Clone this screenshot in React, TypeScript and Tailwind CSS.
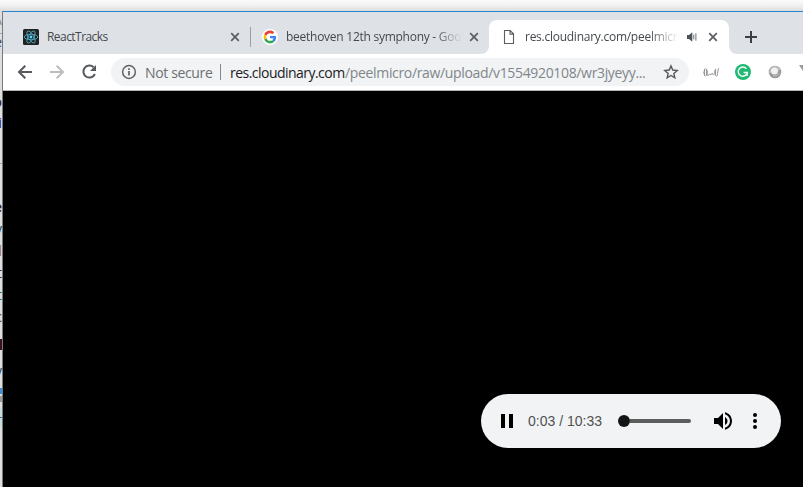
import type { ReactNode } from "react";

const ui = "font-['Open_Sans','Noto_Sans',sans-serif]";

function Close({ className = "" }: { className?: string }) {
  return (
    <svg className={`h-[10px] w-[10px] shrink-0 ${className}`} viewBox="0 0 10 10" fill="none" stroke="#5a5d61" strokeWidth="1.7">
      <path d="M1.2 1.2 8.8 8.8M8.8 1.2 1.2 8.8" />
    </svg>
  );
}

function ReactIcon() {
  return (
    <svg className="h-4 w-4 shrink-0" viewBox="0 0 16 16" fill="none" stroke="#53bcd8" strokeWidth="0.75">
      <rect width="16" height="16" rx="1.5" fill="#222" stroke="none" />
      <ellipse cx="8" cy="8" rx="6.8" ry="2.7" />
      <ellipse cx="8" cy="8" rx="6.8" ry="2.7" transform="rotate(60 8 8)" />
      <ellipse cx="8" cy="8" rx="6.8" ry="2.7" transform="rotate(120 8 8)" />
      <circle cx="8" cy="8" r="1.4" fill="#61dafb" stroke="none" />
    </svg>
  );
}

function GoogleIcon() {
  return (
    <svg className="h-4 w-4 shrink-0 rounded-full bg-white" viewBox="-6 -6 60 60">
      <path fill="#EA4335" d="M24 9.5c3.54 0 6.71 1.22 9.21 3.6l6.85-6.85C35.9 2.38 30.47 0 24 0 14.62 0 6.51 5.38 2.56 13.22l7.98 6.19C12.43 13.72 17.74 9.5 24 9.5z" />
      <path fill="#4285F4" d="M46.98 24.55c0-1.57-.15-3.09-.38-4.55H24v9.02h12.94c-.58 2.96-2.26 5.48-4.78 7.18l7.73 6c4.51-4.18 7.09-10.36 7.09-17.65z" />
      <path fill="#FBBC05" d="M10.53 28.59A14.5 14.5 0 0 1 9.77 24c0-1.6.27-3.14.76-4.59l-7.98-6.19A24 24 0 0 0 0 24c0 3.88.92 7.54 2.56 10.78l7.97-6.19z" />
      <path fill="#34A853" d="M24 48c6.48 0 11.93-2.13 15.89-5.81l-7.73-6c-2.15 1.45-4.92 2.3-8.16 2.3-6.26 0-11.57-4.22-13.47-9.91l-7.98 6.19C6.51 42.62 14.62 48 24 48z" />
    </svg>
  );
}

function TabStrip() {
  return (
    <div className={`flex h-[42px] shrink-0 items-end bg-[#dee1e6] text-[12px] text-[#45494d] ${ui}`}>
      <div className="flex h-[34px] w-[247px] shrink-0 items-center pl-5">
        <ReactIcon />
        <span className="ml-2 w-[183px] whitespace-nowrap tracking-[-0.55px]">ReactTracks</span>
        <Close />
      </div>
      <div className="mb-[7px] h-5 w-px shrink-0 bg-[#9a9da2]" />
      <div className="flex h-[34px] w-[230px] shrink-0 items-center pl-[11px]">
        <GoogleIcon />
        <span className="ml-2 w-[176px] overflow-hidden whitespace-nowrap tracking-[-0.26px] [mask-image:linear-gradient(to_right,black_148px,transparent)]">
          beethoven 12th symphony - Google Search
        </span>
        <Close className="ml-[7px]" />
      </div>
      <svg className="h-2 w-2 shrink-0" viewBox="0 0 8 8"><path d="M8 0v8H0a8 8 0 0 0 8-8Z" fill="#fff" /></svg>
      <div className="flex h-[34px] w-[240px] shrink-0 items-center rounded-t-lg bg-white pl-3">
        <svg className="h-4 w-4 shrink-0" viewBox="0 0 16 16" fill="none" stroke="#5a5d61" strokeWidth="1.1">
          <path d="M3.5 1.5h5.7l3.3 3.3v9.7h-9ZM9 1.8v3.3h3.4" />
        </svg>
        <span className="ml-2 w-[154px] overflow-hidden whitespace-nowrap tracking-[-0.26px] [mask-image:linear-gradient(to_right,black_124px,transparent)]">
          res.cloudinary.com/peelmicro/raw
        </span>
        <svg className="ml-2 h-[10px] w-[10px] shrink-0" viewBox="0 0 10 10">
          <path d="M0 3h2l3.3-2.8v9.6L2 7H0Z" fill="#4f5357" />
          <path d="M6.8 2.7v4.6M8.9 1.3v7.4" stroke="#5f6368" strokeWidth="0.9" />
        </svg>
        <Close className="ml-[11px]" />
      </div>
      <svg className="h-2 w-2 shrink-0" viewBox="0 0 8 8"><path d="M0 0v8h8a8 8 0 0 1-8-8Z" fill="#fff" /></svg>
      <svg className="mb-[11px] ml-2 h-3 w-3 shrink-0" viewBox="0 0 12 12" stroke="#3c4043" strokeWidth="2"><path d="M6 0v12M0 6h12" /></svg>
    </div>
  );
}

function Toolbar() {
  return (
    <div className={`flex h-[37px] shrink-0 items-center overflow-hidden border-b border-[#b5b6b7] bg-white pl-[14px] ${ui}`}>
      <svg className="h-4 w-4 shrink-0" viewBox="0 0 16 16" fill="none" stroke="#56595d" strokeWidth="2"><path d="M15 8H2.5M8.3 1.7 2 8l6.3 6.3" /></svg>
      <svg className="ml-4 h-4 w-4 shrink-0" viewBox="0 0 16 16" fill="none" stroke="#babcbe" strokeWidth="2"><path d="M1 8h12.5M7.7 1.7 14 8l-6.3 6.3" /></svg>
      <svg className="ml-4 h-4 w-4 shrink-0" viewBox="0 0 16 16"><path d="M12.6 3.3A6 6 0 1 0 13.9 10" fill="none" stroke="#56595d" strokeWidth="2" /><path d="M15 1v6H9Z" fill="#56595d" /></svg>
      <div className="ml-[14px] flex h-7 w-[578px] shrink-0 items-center rounded-full bg-[#f1f3f4] pl-[10px] text-[14px]">
        <svg className="h-4 w-4 shrink-0" viewBox="0 0 16 16" fill="none" stroke="#5f6368" strokeWidth="1.5"><circle cx="8" cy="8" r="6.4" /><path d="M8 7v4.6M8 4.2v1.7" strokeWidth="1.7" /></svg>
        <span className="ml-2 w-[75px] shrink-0 whitespace-nowrap tracking-[-0.36px] text-[#6b6f73]">Not secure</span>
        <span className="h-4 w-px shrink-0 bg-[#85888c]" />
        <span className="ml-[9px] w-[115px] shrink-0 whitespace-nowrap tracking-[-0.53px] text-[#202124]">res.cloudinary.com</span>
        <span className="w-[318px] shrink-0 whitespace-nowrap tracking-[-0.34px] text-[#80868b]">/peelmicro/raw/upload/v1554920108/wr3jyeyy...</span>
        <svg className="h-4 w-4 shrink-0" viewBox="0 0 16 16" fill="none" stroke="#56595d" strokeWidth="1.4"><path d="m8 1.9 1.75 4.15 4.5.4-3.4 2.95 1 4.4L8 11.5l-3.85 2.3 1-4.4-3.4-2.95 4.5-.4Z" /></svg>
      </div>
      <svg className="ml-[13px] h-4 w-[18px] shrink-0" viewBox="0 0 18 16" fill="none" stroke="#929292" strokeWidth="1">
        <path d="M3.6 4.6C1.9 4.6 2.8 7.4 1.5 8.4c1.3 1 .3 3.8 2.1 3.8M14.2 12.2c1.9 0 1-2.8 1.6-4.2.5-1.2-.2-3.8 1.4-3.8M5.2 6.2v4.5c0 1 1.7 1 2.2-.6M7.6 9.7c.6 1.6 2.2.9 2.6-.6 0 2 2.3 2 2.6.2V6.2M4.6 4.8v7M13.6 4.8v7M2.6 5.4v6" />
      </svg>
      <svg className="ml-[15px] h-4 w-4 shrink-0" viewBox="0 0 16 16"><circle cx="8" cy="8" r="8" fill="#20b973" /><path d="M11.4 4.7A4.6 4.6 0 1 0 12.4 8.5H8.6M12.2 8.5l-.1 3.2" fill="none" stroke="#fff" strokeWidth="1.4" /></svg>
      <svg className="ml-4 h-4 w-4 shrink-0" viewBox="0 0 16 16"><circle cx="8" cy="8" r="6.3" fill="#999" /><path d="M2.2 9.2A6 6 0 0 1 8 2c3 0 5 1.6 5.8 4Z" fill="#bbb" /><circle cx="7.5" cy="7" r="3.5" fill="#f1f1f1" /><path d="M6 12c3 .4 5-.9 6.5-3.2" fill="none" stroke="#c5c5c5" /></svg>
      <svg className="ml-4 h-4 w-4 shrink-0" viewBox="0 0 16 16"><path d="M0 1h16L8 13Z" fill="#999" /></svg>
    </div>
  );
}

function AudioPlayer() {
  return (
    <div className="flex h-[54px] w-[300px] shrink-0 items-center rounded-full bg-[#f1f3f4]">
      <svg className="ml-[20px] h-[14px] w-3 shrink-0" viewBox="0 0 12 14"><path d="M0 0h4v14H0ZM8 0h4v14H8Z" /></svg>
      <span className="ml-[15px] w-[75px] whitespace-nowrap font-['Liberation_Sans',sans-serif] text-[14px] text-[#505152]">0:03 / 10:33</span>
      <div className="ml-[15px] flex w-[73px] shrink-0 items-center">
        <span className="h-3 w-3 shrink-0 rounded-full bg-[#151515]" />
        <span className="h-1 flex-1 rounded-r-full bg-[#5b5c5c]" />
      </div>
      <svg className="ml-[20px] h-6 w-6 shrink-0" viewBox="0 0 24 24"><path d="M3 9v6h4l5 5V4L7 9H3zm13.5 3c0-1.77-1.02-3.29-2.5-4.03v8.05c1.48-.73 2.5-2.25 2.5-4.02zM14 3.23v2.06c2.89.86 5 3.54 5 6.71s-2.11 5.85-5 6.71v2.06c4.01-.91 7-4.49 7-8.77s-2.99-7.86-7-8.77z" /></svg>
      <svg className="ml-2 h-6 w-6 shrink-0" viewBox="0 0 24 24"><circle cx="12" cy="6" r="2" /><circle cx="12" cy="12" r="2" /><circle cx="12" cy="18" r="2" /></svg>
    </div>
  );
}

function Scrap({ className, children }: { className: string; children?: ReactNode }) {
  return <div className={`flex w-full shrink-0 items-center justify-end overflow-hidden text-[14px] leading-none ${className}`}>{children}</div>;
}

/* Visible edge of the document behind the browser window. */
function BackgroundPage() {
  return (
    <div className={`flex w-[3px] shrink-0 flex-col overflow-hidden border-r border-[#777a7d] bg-[#dedede] text-[#444] ${ui}`}>
      <Scrap className="h-[18px] text-[#888]">A</Scrap>
      <Scrap className="mt-[4px] h-4 border-t border-[#aaa]">e</Scrap>
      <Scrap className="mt-[45px] h-4 font-bold text-[#44260d]">o</Scrap>
      <Scrap className="mt-[5px] h-4 text-[#343080]">i</Scrap>
      <Scrap className="mt-[32px] h-px bg-[#aaa]" />
      <Scrap className="mt-[35px] h-4 font-bold text-[#44260d]">e</Scrap>
      <Scrap className="mt-[6px] h-4 text-[#245]">y</Scrap>
      <Scrap className="mt-[6px] h-4 text-[#a76d2c]">l</Scrap>
      <Scrap className="mt-[6px] h-4 text-[#624]">t</Scrap>
      <Scrap className="mt-[6px] h-4 text-[#276]">t</Scrap>
      <Scrap className="mt-[6px] h-4">c</Scrap>
      <Scrap className="mt-[14px] h-[11px] bg-[#3c1017]" />
      <Scrap className="mt-[11px] h-5 text-[#245]">y</Scrap>
      <Scrap className="mt-[7px] h-[6px] bg-[#3c8fdd]" />
      <Scrap className="mt-[2px] h-[6px] bg-[#999]" />
      <Scrap className="mt-[6px] h-[19px] bg-[#c9dcde]"><span className="h-px w-full bg-[#3f679b]" /></Scrap>
    </div>
  );
}

export default function App() {
  return (
    <div className="flex h-[487px] w-[803px] flex-col overflow-hidden bg-white">
      <div className="h-[11px] shrink-0 bg-linear-to-b from-[#fafafa] via-[#f1f1f1] to-[#dcdcdc]" />
      <div className="flex min-h-0 flex-1">
        <BackgroundPage />
        <div className="flex min-w-0 flex-1 flex-col border-t border-[#2584d0]">
          <TabStrip />
          <Toolbar />
          <div className="flex min-h-0 flex-1 items-end justify-end bg-black pr-[22px] pb-[39px]">
            <AudioPlayer />
          </div>
        </div>
      </div>
    </div>
  );
}
